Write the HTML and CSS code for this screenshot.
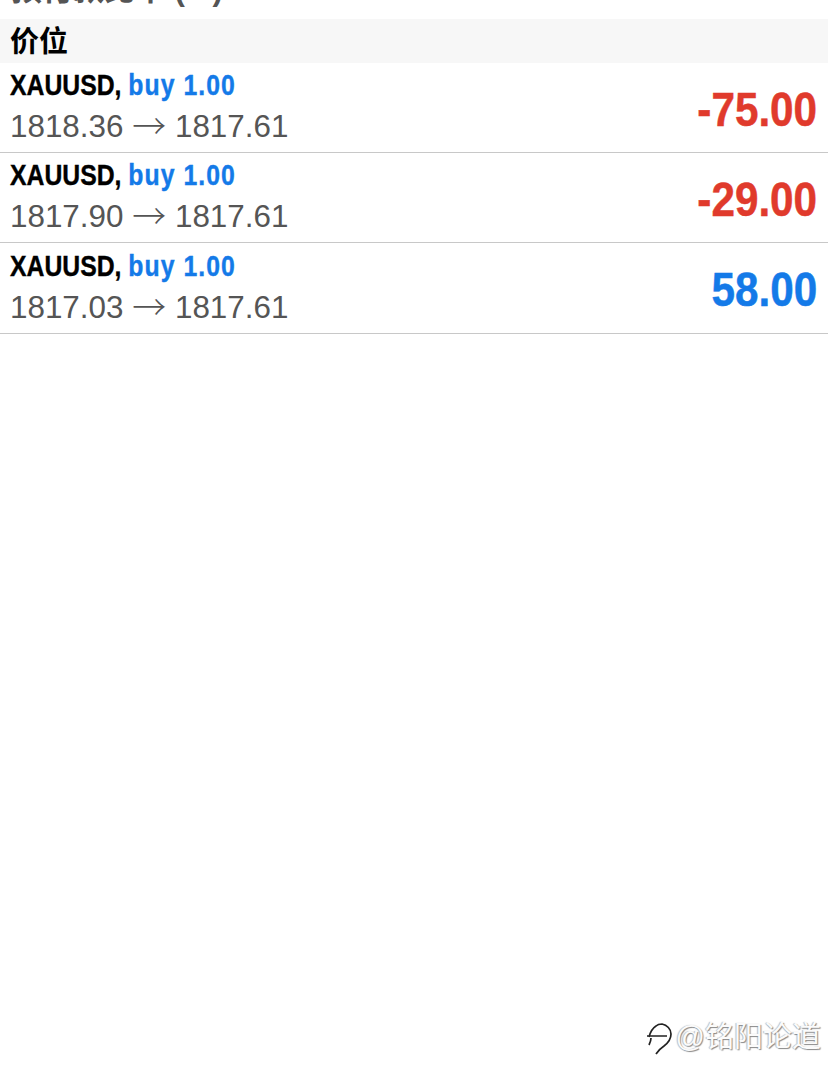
FILE: index.html
```html
<!DOCTYPE html>
<html lang="zh">
<head>
<meta charset="utf-8">
<title>价位</title>
<link rel="stylesheet" href="styles.css">
</head>
<body>
<div class="page">
  <div class="summary"><span>预付款比率 (%)</span><span class="summary-value">7 955.94</span></div>
  <div class="section">价位</div>
  <div class="trade">
    <div class="info">
      <div class="title">XAUUSD, <span class="side">buy 1.00</span></div>
      <div class="prices">1818.36 <span class="arrow">→</span> 1817.61</div>
    </div>
    <div class="profit loss">-75.00</div>
  </div>
  <div class="trade">
    <div class="info">
      <div class="title">XAUUSD, <span class="side">buy 1.00</span></div>
      <div class="prices">1817.90 <span class="arrow">→</span> 1817.61</div>
    </div>
    <div class="profit loss">-29.00</div>
  </div>
  <div class="trade trade-last">
    <div class="info">
      <div class="title">XAUUSD, <span class="side">buy 1.00</span></div>
      <div class="prices">1817.03 <span class="arrow">→</span> 1817.61</div>
    </div>
    <div class="profit gain">58.00</div>
  </div>
  <div class="spacer"></div>
  <div class="watermark">
    <svg class="logo" viewBox="0 0 30 42" width="30" height="42"><path d="M5 24 C6 20 9 15 12 13 C14 11 16 11 18 11 C23 12 27 16 27 21 C27 26 24 30 20 33 C17 35 14 38 12 41 M3 23 H23 M7 25 C7 28 6 30 5 32" fill="none" stroke="#222" stroke-width="1.7"/></svg>
    <span class="mark-text">@铭阳论道</span>
  </div>
</div>
</body>
</html>
```
FILE: styles.css
```css
* { box-sizing: border-box; }
html, body { margin: 0; padding: 0; background: #fff; }
.page {
  width: 828px;
  height: 1085px;
  display: flex;
  flex-direction: column;
  overflow: hidden;
  font-family: "Liberation Sans", "Noto Sans CJK SC", sans-serif;
}
.summary {
  height: 19px;
  flex: none;
  display: flex;
  justify-content: space-between;
  align-items: flex-end;
  padding: 0 11px 14px;
  overflow: hidden;
  font-size: 31px;
  line-height: 31px;
  font-weight: 700;
  color: #555;
}
.summary-value { font-size: 29px; }
.section {
  height: 44px;
  flex: none;
  background: #f7f7f7;
  padding-left: 10px;
  font-size: 29px;
  line-height: 47px;
  font-weight: 700;
  color: #000;
}
.trade {
  height: 90px;
  flex: none;
  display: flex;
  justify-content: space-between;
  align-items: center;
  padding: 0 11px 0 10px;
  border-bottom: 1px solid #c8c8c8;
}
.trade-last { height: 91px; }
.info { margin-top: -1px; }
.title {
  font-size: 30px;
  line-height: 38px;
  padding-bottom: 3px;
  margin-top: -1px;
  font-weight: 700;
  color: #000;
  white-space: nowrap;
  -webkit-text-stroke: 0.4px currentColor;
  transform: scaleX(0.825);
  transform-origin: left center;
}
.side { color: #147ae8; letter-spacing: 1.3px; }
.prices {
  font-size: 31.4px;
  line-height: 40px;
  color: #555;
}
.arrow {
  font-family: "Noto Sans CJK SC", sans-serif;
  font-size: 34px;
  line-height: 1;
  font-weight: 300;
  vertical-align: -2px;
}
.profit {
  font-size: 48px;
  font-weight: 700;
  padding-top: 3px;
  -webkit-text-stroke: 0.5px currentColor;
  transform: scaleX(0.88);
  transform-origin: right center;
}
.loss { color: #e03a2c; }
.gain { color: #147ae8; }
.spacer { flex: 1; }
.watermark {
  flex: none;
  height: 52px;
  margin-bottom: 25px;
  display: flex;
  justify-content: flex-end;
  align-items: center;
  gap: 2px;
  padding-right: 7px;
}
.mark-text {
  font-size: 29px;
  color: #fbfbfb;
  text-shadow: 1px 1px 1px #888, -1px 0 1px #bbb;
}
```
